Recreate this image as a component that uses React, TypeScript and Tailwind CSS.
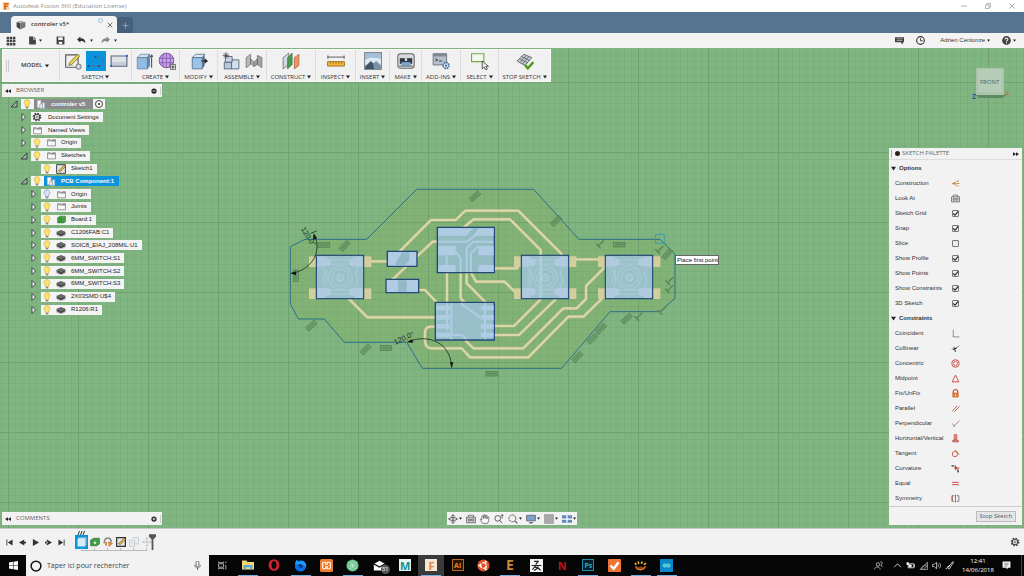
import React from "react";
import type { ReactNode } from "react";

const UI = "font-['Open_Sans','Noto_Sans',sans-serif]";
const ARIAL = "font-['Liberation_Sans',Arial,sans-serif]";

function Svg({ s, w, children, vb }: { s: number; w?: number; vb?: string; children: ReactNode }) {
  return (
    <svg width={w ?? s} height={s} viewBox={vb ?? "0 0 16 16"} fill="none" className="shrink-0" aria-hidden="true">
      {children}
    </svg>
  );
}

function Caret({ s = 4 }: { s?: number }) {
  return (
    <Svg s={s} vb="0 0 8 8">
      <path d="M0 1h8L4 7z" fill="#222" />
    </Svg>
  );
}

/* ---------- window title, document tabs, quick access ---------- */

function TitleBar() {
  return (
    <header className={`flex h-3 items-center justify-between bg-white ${UI}`}>
      <div className="flex items-center gap-[3px] pl-0.5 text-[6px] leading-3 text-[#8c8c8c]">
        <Svg s={8}>
          <rect x="1" width="14" height="16" rx="2" fill="#f3d3b5" />
          <path d="M4 2h9v3.500H8V7h4v3H8v5H4z" fill="#e0701d" />
        </Svg>
        <h1>Autodesk Fusion 360 (Education License)</h1>
      </div>
      <div className="flex items-center gap-[18px] pr-[9px]">
        <button aria-label="Minimize"><Svg s={6}><path d="M0 8h16" stroke="#999" strokeWidth="2" /></Svg></button>
        <button aria-label="Restore"><Svg s={6}><path d="M1 5h10v10H1zM5 5V1h10v10h-4" stroke="#999" strokeWidth="2" /></Svg></button>
        <button aria-label="Close"><Svg s={6}><path d="M1 1l14 14M15 1L1 15" stroke="#999" strokeWidth="2" /></Svg></button>
      </div>
    </header>
  );
}

function TabBar() {
  return (
    <div className={`flex h-[21px] items-end bg-[#56738f] pl-[11px] ${UI}`}>
      <div className="flex h-[17px] w-[106px] items-center rounded-t-sm bg-[#f3f3f3] pr-1 pl-[5px] text-[6px] text-[#333]">
        <Svg s={10}>
          <path d="M1 3l7-2 7 2-6 2z" fill="#aaa" /><path d="M1 3l6 2v10l-6-4z" fill="#444" /><path d="M7 5l8-2v8l-8 4z" fill="#777" />
        </Svg>
        <span className="grow pl-[5px] font-semibold">controler v5*</span>
        <span className="mb-2 mr-1"><Svg s={5}><circle cx="8" cy="8" r="6.500" stroke="#5ab0cf" strokeWidth="2" /></Svg></span>
        <button aria-label="Close tab"><Svg s={6}><path d="M2 2l12 12M14 2L2 14" stroke="#666" strokeWidth="2.500" /></Svg></button>
      </div>
      <button aria-label="New tab" className="flex h-4 w-4 items-center justify-center rounded-t-sm bg-[#46607a]">
        <Svg s={7}><path d="M8 1v14M1 8h14" stroke="#8aa0b5" strokeWidth="2.500" /></Svg>
      </button>
    </div>
  );
}

function QuickBar() {
  return (
    <div className={`flex h-[15px] items-center justify-between bg-[#f3f3f3] pr-2 pl-1.5 ${ARIAL}`}>
      <div className="flex items-center">
        <button aria-label="Data panel" className="mr-3">
          <Svg s={10}>
            <path d="M1 1h4v4H1zM6 1h4v4H6zM11 1h4v4h-4zM1 6h4v4H1zM6 6h4v4H6zM11 6h4v4h-4zM1 11h4v4H1zM6 11h4v4H6zM11 11h4v4h-4z" fill="#444" />
          </Svg>
        </button>
        <button aria-label="File" className="mr-3.5 flex items-center gap-0.5">
          <Svg s={9}><path d="M2 1h7v5h5v9H2z" fill="#444" /><path d="M10 1l4 4h-4z" fill="#444" /></Svg><Caret s={3} />
        </button>
        <button aria-label="Save" className="mr-3">
          <Svg s={9}><path d="M1 1h14v14H1z" fill="#444" /><path d="M4 2h8v5H4zM5 10h6v4H5z" fill="#f3f3f3" /></Svg>
        </button>
        <button aria-label="Undo" className="mr-2 flex items-center gap-1">
          <Svg s={9}><path d="M0 6l6-5v3c5 0 9 2 9 9-2-3-5-4-9-4v3z" fill="#333" /></Svg><Caret s={3} />
        </button>
        <button aria-label="Redo" className="flex items-center gap-1">
          <Svg s={9}><path d="M16 6l-6-5v3c-5 0-9 2-9 9 2-3 5-4 9-4v3z" fill="#888" /></Svg><Caret s={3} />
        </button>
      </div>
      <div className="flex items-center text-[6px] text-[#333]">
        <button aria-label="Comments" className="mr-3">
          <Svg s={9}><path d="M0 2h16v9h-2v4l-4-4H0z" fill="#444" /><path d="M3 5h10M3 8h10" stroke="#ddd" /></Svg>
        </button>
        <button aria-label="Job status" className="mr-[15px]">
          <Svg s={9}><circle cx="8" cy="8" r="6.800" stroke="#333" strokeWidth="2" /><path d="M8 4v4.500h4" stroke="#333" strokeWidth="1.600" /></Svg>
        </button>
        <button className="mr-3 flex items-center gap-0.5">Adrien Centonze<Caret s={3} /></button>
        <button aria-label="Help" className="flex items-center gap-0.5">
          <Svg s={9}><circle cx="8" cy="8" r="7.800" fill="#444" /><path d="M5.500 6c0-3.500 5-3 5-.3C10.500 8 8 7.500 8 10M8 11.500v2" stroke="#fff" strokeWidth="1.800" /></Svg><Caret s={3} />
        </button>
      </div>
    </div>
  );
}

/* ---------- ribbon ---------- */

const boxBody = (
  <>
    <path d="M2 5l3-3h8l-2 3z" fill="#cfe2f3" stroke="#56728f" strokeWidth=".6" />
    <path d="M11 5l2-3v10l-2 3z" fill="#5d86b5" stroke="#56728f" strokeWidth=".6" />
    <path d="M2 5h9v10H2z" fill="#92bbe4" stroke="#56728f" strokeWidth=".6" />
  </>
);

const ic = {
  sketch: (
    <Svg s={18}>
      <path d="M1.500 2.500h11v11h-11z" fill="#eee" stroke="#555" /><path d="M2 13L5 9l5 4z" fill="#d3d9de" />
      <path d="M5 9.500L12 2l2 1.600-7 7.500-2.500.8z" fill="#e8d44d" stroke="#6b6327" strokeWidth=".6" />
      <circle cx="13" cy="13" r="2.300" fill="#d5dbe2" stroke="#555" strokeWidth=".7" />
    </Svg>
  ),
  line: (
    <Svg s={18}>
      <path d="M1 12.500h9.500a4 4 0 0 0 0-8H7.500" stroke="#3c78ad" strokeWidth="1.100" />
      <circle cx="1.500" cy="12.500" r=".9" fill="#1c4d80" /><circle cx="10.500" cy="12.500" r=".9" fill="#1c4d80" /><circle cx="7.500" cy="4.500" r=".9" fill="#1c4d80" />
    </Svg>
  ),
  rect: (
    <Svg s={18}>
      <path d="M1 3.500h14v9H1z" fill="#dfe4ea" stroke="#596575" /><path d="M2 9h12v3H2z" fill="#c4ccd6" />
      <circle cx="15" cy="3.500" r="1" fill="#2765b8" /><circle cx="1" cy="12.500" r="1" fill="#2765b8" />
    </Svg>
  ),
  extrude: <Svg s={18}>{boxBody}<path d="M14.800 14V3M13.500 4.500L14.800 2.500 16 4.500" stroke="#333" strokeWidth=".8" /></Svg>,
  form: (
    <Svg s={18}>
      <circle cx="7.500" cy="7.500" r="6.500" fill="#c3a2e6" stroke="#74509c" strokeWidth=".8" />
      <path d="M1 5.500h13M1 9.500h13M5 1.500c-1.500 4-1.500 8 0 12M10 1.500c1.500 4 1.500 8 0 12M7.500 1v13" stroke="#7d53ab" strokeWidth=".7" />
      <path d="M11 11h4.500v4.500H11z" fill="#eee" stroke="#333" strokeWidth=".6" /><path d="M13.200 11.800v3M11.800 13.300h3" stroke="#333" strokeWidth=".8" />
    </Svg>
  ),
  modify: (
    <Svg s={18}>
      <path d="M2 5l3-3h8l-2 3z" fill="#dde9f4" stroke="#4a6a8c" strokeWidth=".7" /><path d="M11 5l2-3v10l-2 3z" fill="#4c7097" />
      <path d="M2 5h9v10H2z" fill="#9cc1e6" stroke="#4a6a8c" strokeWidth=".7" /><path d="M10 7.500h3V5.500l3 2.500-3 2.500V8.500h-3z" fill="#222" />
    </Svg>
  ),
  newComp: (
    <Svg s={18}>
      <path d="M2 9h6.500v6H2z" fill="#b9c9da" stroke="#53677d" strokeWidth=".8" /><path d="M8.500 7h6.500v8H8.500z" fill="#d5dfe9" stroke="#53677d" strokeWidth=".8" />
      <path d="M3 4h6v5H3z" fill="#c8d6e5" stroke="#53677d" strokeWidth=".8" />
      <path d="M3.500 0v6M.5 3h6M1.500 1l4 4M5.500 1l-4 4" stroke="#333" strokeWidth=".6" />
    </Svg>
  ),
  joint: (
    <Svg s={18}>
      <path d="M1 5l4-3v9l-4 3zM5 6l3 3v4L5 10z" fill="#b5b8bb" stroke="#666" strokeWidth=".6" />
      <path d="M15 14l-4-3V3l4 2zM11 6L8 9v4l3-2z" fill="#a0a4a8" stroke="#666" strokeWidth=".6" />
    </Svg>
  ),
  construct: (
    <Svg s={18}>
      <path d="M1 5l5-4v10l-5 4z" fill="#cfdbe6" stroke="#555" strokeWidth=".6" /><path d="M5 5l4-4v10l-4 4z" fill="#4d9a50" stroke="#346b36" strokeWidth=".6" />
      <path d="M11 5l4-3v10l-4 3z" fill="#ef9565" stroke="#a5532a" strokeWidth=".6" />
    </Svg>
  ),
  inspect: (
    <Svg s={18}>
      <path d="M.5 4.500h15M.8 3v3M15.200 3v3" stroke="#555" strokeWidth=".8" />
      <path d="M.5 8.500h15v4H.5z" fill="#f0b53a" stroke="#8d661b" strokeWidth=".7" /><path d="M3 9v1.500M5.500 9v1.500M8 9v1.500M10.500 9v1.500M13 9v1.500" stroke="#7a5611" strokeWidth=".6" />
    </Svg>
  ),
  insert: (
    <Svg s={18}>
      <path d="M.5.5h15v15H.5z" fill="#a3c0d8" stroke="#777" strokeWidth=".8" /><path d="M1 7c4-3 9-2 14-1v5H1z" fill="#dce9f2" />
      <path d="M1 13l5-5 4 4v3H1z" fill="#3f5366" /><path d="M8 10l3-2 4 4v3H9z" fill="#7c92a6" />
    </Svg>
  ),
  make: (
    <Svg s={18}>
      <rect x=".7" y="1.500" width="14.600" height="13" rx="2.500" fill="#d6d8da" stroke="#666" strokeWidth=".9" /><path d="M2.500 5.500h11v5h-11z" fill="#2f3843" />
      <path d="M7 5.500h2V8H7z" fill="#ddd" /><path d="M4 9h8v3.500H4z" fill="#7ba5cf" /><path d="M2 12.500h12" stroke="#777" />
    </Svg>
  ),
  addins: (
    <Svg s={18}>
      <path d="M1 1.500h12v10H1z" fill="#b9c0c9" stroke="#68727d" strokeWidth=".8" /><path d="M1 1.500h12v2.500H1z" fill="#7f8994" /><path d="M3 6l2 1-2 1M6 8h3" stroke="#333" strokeWidth=".8" />
      <circle cx="12.500" cy="12" r="2.600" fill="#dbe6f1" stroke="#456c97" strokeWidth="1.400" strokeDasharray="1.400 .6" /><circle cx="12.500" cy="12" r="1" fill="#456c97" />
    </Svg>
  ),
  select: (
    <Svg s={18}>
      <path d="M.5 1.500h11v7H.5z" fill="#f3f7ec" stroke="#79a648" /><path d="M10 8v7l1.800-1.600 1.300 2.500 1.400-.7-1.300-2.400h2.300z" fill="#eee" stroke="#333" strokeWidth=".7" />
    </Svg>
  ),
  stop: (
    <Svg s={18}>
      <path d="M1 8l6-6 7 3-6 7z" fill="#c6cbd0" stroke="#5c646c" strokeWidth=".8" /><path d="M3 6l7 3.500M5 4l7 3.500M3.300 9.500l6-6.500M5.600 10.800l6-7" stroke="#5c646c" strokeWidth=".7" />
      <path d="M8 11.500l2.500 3L15.500 9" stroke="#4b9c1e" strokeWidth="2.200" />
    </Svg>
  ),
};

const groups: { label: string; width: string; icons: ReactNode[]; active?: number }[] = [
  { label: "SKETCH", width: "w-[72px]", icons: [ic.sketch, ic.line, ic.rect], active: 1 },
  { label: "CREATE", width: "w-12", icons: [ic.extrude, ic.form] },
  { label: "MODIFY", width: "w-[38px]", icons: [ic.modify] },
  { label: "ASSEMBLE", width: "w-[49px]", icons: [ic.newComp, ic.joint] },
  { label: "CONSTRUCT", width: "w-[49px]", icons: [ic.construct] },
  { label: "INSPECT", width: "w-10", icons: [ic.inspect] },
  { label: "INSERT", width: "w-[34px]", icons: [ic.insert] },
  { label: "MAKE", width: "w-8", icons: [ic.make] },
  { label: "ADD-INS", width: "w-[39px]", icons: [ic.addins] },
  { label: "SELECT", width: "w-[38px]", icons: [ic.select] },
  { label: "STOP SKETCH", width: "w-[52px]", icons: [ic.stop] },
];

function Ribbon() {
  return (
    <nav className={`flex h-[33px] items-stretch self-start border border-[#fbfbfb] bg-[#f1f1f1] text-[6px] text-[#333] ${UI}`}>
      <div className="flex w-14 items-center">
        <span className="ml-[3px] h-3 w-[3px] border-x border-[#ccc]" />
        <button className="ml-3 flex items-center gap-[3px] font-semibold">MODEL<Caret s={4} /></button>
      </div>
      {groups.map((g) => (
        <div key={g.label} className={`flex flex-col items-center border-l border-[#dcdcdc] ${g.width}`}>
          <div className="mt-px flex gap-[3px]">
            {g.icons.map((icon, i) => (
              <button
                key={i}
                aria-label={`${g.label} ${i + 1}`}
                className={`flex h-5 w-5 items-center justify-center ${g.active === i ? "bg-[#0a94dc]" : ""}`}
              >
                {icon}
              </button>
            ))}
          </div>
          <button className="mt-0.5 flex items-center gap-0.5 leading-2 whitespace-nowrap">{g.label}<Caret s={4} /></button>
        </div>
      ))}
    </nav>
  );
}

/* ---------- browser tree ---------- */

function PanelBar({ title, sign }: { title: string; sign: "minus" | "plus" }) {
  return (
    <div className={`flex h-[13px] items-center bg-[#f2f2f2] pr-px pl-[3px] text-[6px] text-[#666] ${UI}`}>
      <button aria-label={`Collapse ${title}`}><Svg s={6}><path d="M8 3v10L0 8zM16 3v10L8 8z" fill="#222" /></Svg></button>
      <h2 className="grow pl-[5px]">{title}</h2>
      <button aria-label={`${title} options`}>
        <Svg s={6}><circle cx="8" cy="8" r="7" fill="#222" /><path d={sign === "minus" ? "M4 8h8" : "M4 8h8M8 4v8"} stroke="#fff" strokeWidth="2" /></Svg>
      </button>
      <span className="ml-[3px] h-2 w-px bg-[#ccc]" />
    </div>
  );
}

function Bulb({ off }: { off?: boolean }) {
  return (
    <Svg s={10}>
      <path d="M8 1a4.600 4.600 0 0 0-2.600 8.400V12h5.200V9.400A4.600 4.600 0 0 0 8 1z" fill={off ? "#dbe4f6" : "#ffe46a"} stroke={off ? "#7286ae" : "#c9a346"} strokeWidth="1" />
      <path d="M6 13h4v2H6z" fill="#777" />
    </Svg>
  );
}

const treeIcons = {
  folder: <Svg s={9}><path d="M1 3h5l1 2h8v9H1z" fill="#f8f8f8" stroke="#777" strokeWidth="1.300" /><path d="M1 5h14M9 3h6v2" stroke="#777" strokeWidth="1.300" /></Svg>,
  gear: <Svg s={10}><circle cx="8" cy="8" r="5.800" stroke="#444" strokeWidth="2.400" strokeDasharray="2.400 2.150" /><circle cx="8" cy="8" r="4.400" stroke="#444" strokeWidth="1.700" /><circle cx="8" cy="8" r="1.600" stroke="#444" strokeWidth="1" /></Svg>,
  doc: <Svg s={10}><path d="M2 2h6v12H2z" fill="#fafafa" stroke="#aaa" /><path d="M6 8h4v7H6zM10 6h4v9h-4z" fill="#f2f5f8" stroke="#90a4b8" /></Svg>,
  sketch: <Svg s={10}><path d="M1 1v14h14V1z" fill="#e4e4e4" stroke="#444" strokeWidth="1.600" /><path d="M4 11L13 2l2 2-8 8z" fill="#f3c832" stroke="#444" /></Svg>,
  board: <Svg s={9}><path d="M1 5l4-3h10v10l-3 2H1z" fill="#43a046" stroke="#2b7a30" /><path d="M5 5v8M8 5v8" stroke="#2b7a30" /></Svg>,
  chip: <Svg s={10}><path d="M1 6l7-3 7 3-7 3z" fill="#666" /><path d="M1 6v4l7 3.500L15 10V6L8 9z" fill="#444" /><path d="M2 8.500v4M5 10v4M11 10v4M14 8.500v4" stroke="#777" /></Svg>,
};

type TreeRow = { text: string; level: number; icon: keyof typeof treeIcons; open?: boolean; leaf?: boolean; bulb?: "on" | "off"; tone?: "root" | "active" };

const tree: TreeRow[] = [
  { text: "controler v5", level: 0, icon: "doc", open: true, bulb: "on", tone: "root" },
  { text: "Document Settings", level: 1, icon: "gear" },
  { text: "Named Views", level: 1, icon: "folder" },
  { text: "Origin", level: 1, icon: "folder", bulb: "on" },
  { text: "Sketches", level: 1, icon: "folder", open: true, bulb: "on" },
  { text: "Sketch1", level: 2, icon: "sketch", leaf: true, bulb: "on" },
  { text: "PCB Component:1", level: 1, icon: "doc", open: true, bulb: "on", tone: "active" },
  { text: "Origin", level: 2, icon: "folder", bulb: "off" },
  { text: "Joints", level: 2, icon: "folder", bulb: "on" },
  { text: "Board:1", level: 2, icon: "board", bulb: "on" },
  { text: "C1206FAB:C1", level: 2, icon: "chip", bulb: "on" },
  { text: "SOIC8_EIAJ_208MIL:U1", level: 2, icon: "chip", bulb: "on" },
  { text: "6MM_SWITCH:S1", level: 2, icon: "chip", bulb: "on" },
  { text: "6MM_SWITCH:S2", level: 2, icon: "chip", bulb: "on" },
  { text: "6MM_SWITCH:S3", level: 2, icon: "chip", bulb: "on" },
  { text: "2X03SMD:U$4", level: 2, icon: "chip", bulb: "on" },
  { text: "R1206:R1", level: 2, icon: "chip", bulb: "on" },
];

const indent = ["pl-0", "pl-2.5", "pl-5"];
const tones = { root: "bg-[#8b8b8b] font-bold text-white pr-2", active: "bg-[#0a94dc] font-bold text-white pr-[5px]", plain: "pr-1" };

function Tree() {
  return (
    <ul className={`mt-px grid h-[218px] auto-rows-fr pl-[5px] text-[6px] text-[#222] ${ARIAL}`}>
      {tree.map((r, i) => (
        <li key={i} className={`flex items-center ${indent[r.level]}`}>
          <span className="flex w-3.5 justify-center">
            {!r.leaf && (
              <button aria-label={`Toggle ${r.text}`}>
                <Svg s={8}>
                  {r.open ? <path d="M14 2v12H2z" fill="#9ab49a" stroke="#223" strokeWidth="1.500" /> : <path d="M4 1l7 7-7 7z" fill="#eef5ee" stroke="#223" strokeWidth="1.500" />}
                </Svg>
              </button>
            )}
          </span>
          <div className="flex h-2.5 items-center bg-[#f4f4f4] whitespace-nowrap">
            {r.bulb && <span className="w-[13px] pl-px"><Bulb off={r.bulb === "off"} /></span>}
            <span className={`flex h-full items-center ${tones[r.tone ?? "plain"]}`}>
              <span className={`flex justify-center ${r.bulb ? "mr-[3px] w-3.5" : "mr-[5px] w-3"}`}>{treeIcons[r.icon]}</span>
              {r.text}
            </span>
            {r.tone === "root" && (
              <label className="flex w-3 justify-center">
                <input type="radio" name="active-component" defaultChecked aria-label="Activate component" className="h-2 w-2 appearance-none rounded-full border border-[#444] bg-[#333] bg-clip-content p-0.5" />
              </label>
            )}
          </div>
        </li>
      ))}
    </ul>
  );
}

/* ---------- sketch palette ---------- */

const R = "#c8413c";
const options: [string, ReactNode | boolean][] = [
  ["Construction", <Svg s={9}><path d="M14 3L2 8l12 5M4 8h11" stroke="#c08a4a" strokeWidth="1.700" strokeDasharray="5 1" /></Svg>],
  ["Look At", <Svg s={9}><path d="M1 5h14v9H1z" fill="#e5e5ea" stroke="#555" strokeWidth="1.300" /><path d="M4 5V2h8v3M4 8h3v3H4zM9 8h3v3H9z" stroke="#555" strokeWidth="1.200" /></Svg>],
  ["Sketch Grid", true],
  ["Snap", true],
  ["Slice", false],
  ["Show Profile", true],
  ["Show Points", true],
  ["Show Constraints", true],
  ["3D Sketch", true],
];

const constraints: [string, ReactNode][] = [
  ["Coincident", <><path d="M4 1v13h11" stroke="#777" strokeWidth="1.400" /><path d="M4 13h1" stroke={R} strokeWidth="2" /></>],
  ["Collinear", <><path d="M1 9h5L15 3" stroke="#777" strokeWidth="1.400" /><path d="M5 5l3 9M4 10l6-3" stroke="#333" strokeWidth="1.800" /></>],
  ["Concentric", <><circle cx="8" cy="8" r="6.700" stroke={R} strokeWidth="1.600" /><circle cx="8" cy="8" r="3.700" stroke={R} strokeWidth="1.400" /></>],
  ["Midpoint", <path d="M8 2l6 12H2z" stroke={R} strokeWidth="1.600" />],
  ["Fix/UnFix", <><path d="M4 8V5c0-5 8-5 8 0v3" stroke="#c75f28" strokeWidth="2.200" /><path d="M2.500 6.500h11V15h-11z" fill="#d9702f" /><path d="M8 9v4M6 11h4" stroke="#fff" /></>],
  ["Parallel", <path d="M2 13L11 3M6 14l9-10" stroke="#a5604a" strokeWidth="1.600" />],
  ["Perpendicular", <path d="M2 8l5 5M4 14L15 3" stroke="#9d5a55" strokeWidth="1.400" />],
  ["Horizontal/Vertical", <><path d="M5.500 1h5v9h-5z" fill="#db8884" stroke={R} /><path d="M3 11h10v3H3z" fill="#db8884" stroke="#a33" /></>],
  ["Tangent", <><circle cx="7" cy="9" r="4.700" stroke="#c4573a" strokeWidth="1.600" /><path d="M7 1l8 9" stroke="#c4573a" strokeWidth="1.300" /></>],
  ["Curvature", <><path d="M1 3l4 1M7 5l4 3M12 10l1 5" stroke="#222" strokeWidth="2.200" /><path d="M7 2l2 9M15 7L6 8" stroke={R} strokeWidth="2" /></>],
  ["Equal", <path d="M2 6h12M2 10h12" stroke={R} strokeWidth="1.600" />],
  ["Symmetry", <><path d="M6 3H2v10h4M10 3h4v10h-4" stroke="#777" strokeWidth="1.600" /><path d="M2 3v10M8 1v14" stroke={R} strokeWidth="1.500" /></>],
];

function SectionTitle({ children }: { children: string }) {
  return (
    <h3 className="flex h-[15px] items-center gap-[3px] pl-0.5 font-bold">
      <Caret s={5} />
      {children}
    </h3>
  );
}

function Palette() {
  return (
    <aside className={`flex w-[133px] flex-col bg-[#f2f2f2] text-[6px] text-[#333] ${ARIAL}`}>
      <div className={`flex h-3 items-center border-b border-[#dcdcdc] pr-[3px] pl-0.5 text-[#666] ${UI}`}>
        <span className="h-2 w-px bg-[#aaa]" />
        <button aria-label="Palette options" className="ml-[3px]"><Svg s={5}><circle cx="8" cy="8" r="8" fill="#222" /></Svg></button>
        <h2 className="grow pl-0.5">SKETCH PALETTE</h2>
        <button aria-label="Collapse palette"><Svg s={6}><path d="M0 3v10l8-5zM8 3v10l8-5z" fill="#222" /></Svg></button>
      </div>
      <section className="mt-px">
        <SectionTitle>Options</SectionTitle>
        {options.map(([name, v]) =>
          typeof v === "boolean" ? (
            <label key={name} className="flex h-[15px] items-center pl-1.5">
              <span className="w-[54px] whitespace-nowrap">{name}</span>
              <span className="grid w-3 place-items-center">
                <input type="checkbox" defaultChecked={v} className="peer col-start-1 row-start-1 h-[7px] w-[7px] appearance-none rounded-[1px] border border-[#777] bg-[#eee]" />
                <span className="pointer-events-none invisible col-start-1 row-start-1 peer-checked:visible">
                  <Svg s={7}><path d="M3 8l4 4 7-9" stroke="#222" strokeWidth="2.500" /></Svg>
                </span>
              </span>
            </label>
          ) : (
            <button key={name} className="flex h-[15px] w-full items-center pl-1.5 text-left">
              <span className="w-[54px] whitespace-nowrap">{name}</span>
              <span className="flex w-3 justify-center">{v}</span>
            </button>
          ),
        )}
      </section>
      <section>
        <SectionTitle>Constraints</SectionTitle>
        {constraints.map(([name, icon]) => (
          <button key={name} className="flex h-[15px] w-full items-center pl-1.5 text-left">
            <span className="w-[54px] whitespace-nowrap">{name}</span>
            <span className="flex w-3 justify-center"><Svg s={9}>{icon}</Svg></span>
          </button>
        ))}
      </section>
      <div className="flex h-[19px] items-center justify-end border-t border-[#ccc] pr-1.5">
        <button className={`h-[11px] w-10 border border-[#bbb] bg-[#e6e6e6] leading-none text-[#555] ${UI}`}>Stop Sketch</button>
      </div>
    </aside>
  );
}

/* ---------- model canvas ---------- */

const outline = "M410 28H761L897 178H1140L1185 222V355L1140 395H990L845 565H427L380 487H193L133 417H55L31 373V200L75 178H260Z";

const traces = [
  "M358 215L453 120H527L556 92H715L847 224",
  "M338 298L458 185H530",
  "M530 160L580 118H690L782 210V226",
  "M270 244H325",
  "M415 330H435L470 367",
  "M205 355L262 412H470",
  "M501 276V370",
  "M542 276V355L570 385",
  "M560 276V310L618 368",
  "M572 276L588 305H674L704 335",
  "M640 265H712V250",
  "M640 438H702L782 358",
  "M640 465H717L827 358",
  "M468 440H450Q435 442 435 458V485Q438 505 455 505H545L570 532H745L865 410H910L967 355",
  "M555 480L580 505H730L850 385H890L918 357V318L974 262",
  "M886 238H960",
];

const marks = [
  [585, 49, -42], [131, 195, 0], [194, 198, -45], [48, 287, 90], [94, 437, -42], [257, 508, -45], [318, 504, 0], [635, 581, 0],
  [828, 123, -45], [1018, 194, 0], [1162, 222, -50], [1040, 416, -42], [963, 446, -45], [937, 476, -45], [892, 531, -45],
];

const perps = [[960, 193], [1138, 210], [1168, 303], [1167, 328], [1075, 410], [1145, 392]];

function Switch({ x }: { x: number }) {
  return (
    <g transform={`translate(${x} 226)`}>
      <g fill="#d3cf9c">
        <rect x="-22" y="3" width="24" height="32" /><rect x="141" y="3" width="24" height="32" />
        <rect x="-22" y="99" width="24" height="32" /><rect x="141" y="99" width="24" height="32" />
      </g>
      <rect width="142" height="130" fill="#9ac0c9" stroke="#23487a" strokeWidth="3.500" />
      <g fill="#b0cadf">
        <rect x="3" y="4" width="24" height="30" /><rect x="115" y="4" width="24" height="30" />
        <rect x="3" y="98" width="24" height="30" /><rect x="115" y="98" width="24" height="30" />
        <circle cx="31" cy="21" r="12" /><circle cx="111" cy="21" r="12" /><circle cx="31" cy="109" r="12" /><circle cx="111" cy="109" r="12" />
      </g>
      <g fill="none" stroke="#b6d3dd" strokeWidth="2">
        <path d="M36 14h70M36 26h70M36 104h70M36 116h70M18 36l8 18-6 20 6 22M30 40v50M124 36l-6 18 6 20-6 22" />
        <path d="M72 30l26 11 11 26-11 26-26 11-26-11-11-26 11-26z" />
        <circle cx="72" cy="67" r="25" /><circle cx="72" cy="67" r="10" strokeWidth="3" /><circle cx="72" cy="67" r="3" />
      </g>
    </g>
  );
}

function Board() {
  return (
    <svg className="absolute inset-0 h-full w-full" viewBox="0 48 1024 480" preserveAspectRatio="xMidYMid slice" role="img" aria-label="PCB sketch">
      <defs>
        <pattern id="minor" width="7" height="7" x="568" y="222" patternUnits="userSpaceOnUse">
          <path d="M0 .5h7M.5 0v7" stroke="#73a773" strokeOpacity=".5" />
        </pattern>
        <pattern id="major" width="70" height="70" x="568" y="222" patternUnits="userSpaceOnUse">
          <path d="M0 .5h70M.5 0v70" stroke="#6a9d6a" strokeOpacity=".7" />
        </pattern>
      </defs>
      <rect y="48" width="1024" height="480" fill="#80b581" />
      <g transform="translate(280 180) scale(.33333)">
        <path d={outline} fill="#82b274" />
      </g>
      <rect y="48" width="1024" height="480" fill="url(#minor)" />
      <rect y="48" width="1024" height="480" fill="url(#major)" />
      <g transform="translate(280 180) scale(.33333)">
        <path d={outline} fill="none" stroke="#2c6f8c" strokeWidth="3" />
        <g fill="none" strokeLinejoin="round">
          {traces.map((d) => <path key={d} d={d} stroke="#bdb583" strokeWidth="9" />)}
          {traces.map((d) => <path key={d} d={d} stroke="#d8d9a9" strokeWidth="6.500" />)}
        </g>
        <Switch x={109} />
        <Switch x={724} />
        <Switch x={976} />
        <path d="M782 228v126" stroke="#b0cadf" strokeWidth="8" />
        <g stroke="#23487a" strokeWidth="4">
          <path d="M322 214h89v45h-89z" fill="#b0cbe4" /><path d="M318 298h98v40h-98z" fill="#b0cbe4" />
          <path d="M472 142h171v136H472z" fill="#93bcc3" /><path d="M466 367h177v113H466z" fill="#98bfc9" />
        </g>
        <path d="M348 245l18-28h22v25l-14 14h-26zM354 301h26v34h-26z" fill="#93b9c8" />
        <g fill="#b0cbe4">
          <path d="M475 145h104l-20 22h-84zM595 145h46v22h-62zM475 198h52v28h-52zM595 198h46v28h-46zM475 255h52v21h-52zM595 255h46v21h-46z" />
          <path d="M469 377h40v14h-40zM469 405h40v14h-40zM469 432h40v14h-40zM469 458h40v14h-40zM602 377h39v14h-39zM602 405h39v14h-39zM602 432h39v14h-39zM602 458h39v14h-39z" />
        </g>
        <g fill="none" stroke="#b0cbe4" strokeWidth="6">
          <path d="M475 185h85l30-22M500 226v50M527 215l15 20v41M640 185h-60l-20 20v71M595 198l-22 22v56M542 370l58 42M501 370v80M514 370v108M490 465h55l15 12M615 370v108" />
        </g>
        <g fill="#628f62" stroke="#4f7c50" strokeWidth="2">
          {marks.map(([x, y, a]) => (
            <g key={`${x}-${y}`} transform={`translate(${x} ${y}) rotate(${a})`}>
              <rect x="-17" y="-7" width="34" height="14" fillOpacity=".6" />
              <path d="M-12 0h24" />
            </g>
          ))}
        </g>
        <g stroke="#5a885b" strokeWidth="4.500" fill="none">
          {perps.map(([x, y]) => <path key={`${x}-${y}`} d={`M${x - 12} ${y - 2}l14 14M${x - 5} ${y + 5}l17-17`} />)}
        </g>
        <path d="M1127 163h26v27h-26z" fill="none" stroke="#3e9ba5" strokeWidth="3" />
        <g fill="none" stroke="#1d2f1d" strokeWidth="2.500">
          <path d="M35 280C92 270 128 220 103 163M92 160l18-7" />
          <path d="M383 485C450 460 512 490 515 562" />
        </g>
        <path d="M31 280l17-6v12zM101 160l-2 19 12-4zM381 487l16-9 2 10zM515 565l-5-18h10z" fill="#111" />
        <g fill="#1d331d" fontFamily="Liberation Sans, Arial, sans-serif" fontSize="22">
          <text transform="translate(62 147) rotate(58)">120.0°</text>
          <text transform="translate(346 494) rotate(-24)">120.0°</text>
        </g>
      </g>
      <rect x="675.500" y="255.500" width="43" height="9" fill="#fff" stroke="#666" />
      <text x="677" y="262" fontFamily="Liberation Sans, Arial, sans-serif" fontSize="6" fill="#111">Place first point</text>
    </svg>
  );
}

function ViewCube() {
  return (
    <div className="absolute top-3 right-3">
      <svg width="42" height="42" viewBox="0 0 42 42" className={UI}>
        <path d="M6 35h28l4-1-6 4H9z" fill="#5d8a62" />
        <path d="M6 8h28v27H6z" fill="#a9c5ab" />
        <path d="M8 9h24v23H8z" fill="#b5cdb7" />
        <text x="10" y="24" fontSize="6" fill="#4d6570">FRONT</text>
        <text x="6" y="5" fontSize="6" fill="#5fd867">Y</text>
        <text x="35" y="36" fontSize="7" fill="#d0643f">X</text>
        <text x="2" y="39" fontSize="7" fontWeight="bold" fill="#2a5c9c">Z</text>
      </svg>
    </div>
  );
}

const navItems: [string, ReactNode, boolean][] = [
  ["Orbit", <path d="M8 1v14M5 4l3-3 3 3M5 12l3 3 3-3M1 8c2-3 12-3 14 0-2 3-12 3-14 0" stroke="#555" strokeWidth="1.500" />, true],
  ["Look at", <><path d="M1 5h14v9H1z" fill="#ddd" stroke="#555" strokeWidth="1.300" /><path d="M4 5V2h8v3M4 8h3v3H4zM9 8h3v3H9z" stroke="#555" strokeWidth="1.200" /></>, false],
  ["Pan", <path d="M4 15C2 12 1 10 1 8l2 1V3.500l1.500-1L6 7V1.500h2V7l1-5 2 .5V8l1.500-4L14 5c0 4 0 7-2 10z" fill="#fff" stroke="#555" strokeWidth="1.200" />, false],
  ["Zoom", <><circle cx="6" cy="7" r="4.500" stroke="#555" strokeWidth="1.500" /><path d="M9 10l4 5M13 1v6M11 3l2-2 2 2" stroke="#555" strokeWidth="1.500" /></>, false],
  ["Fit", <><circle cx="7" cy="7" r="5.500" stroke="#555" strokeWidth="1.500" strokeDasharray="4 1" /><path d="M11 11l4 4" stroke="#555" strokeWidth="2" /></>, true],
  ["Display", <><path d="M1 2h14v9H1z" fill="#7e9fc9" stroke="#667" strokeWidth="1.400" /><path d="M5 14h6" stroke="#556" strokeWidth="2" /></>, true],
  ["Grid", <path d="M1 1h14v14H1z" fill="#aaa" stroke="#888" />, true],
  ["Viewports", <><path d="M0 2h16v12H0z" fill="#6488ba" /><path d="M8 2v12M0 8h16" stroke="#fff" strokeWidth="2" /></>, true],
];

function NavBar() {
  return (
    <nav className="flex h-[13px] w-[130px] items-center justify-between bg-[#f2f2f2] px-px">
      {navItems.map(([name, icon, menu]) => (
        <button key={name} aria-label={name} className="flex items-center gap-px">
          <Svg s={10}>{icon}</Svg>
          {menu && <Caret s={3} />}
        </button>
      ))}
    </nav>
  );
}

/* ---------- timeline ---------- */

const play: [string, string][] = [
  ["First", "M1 1h2v14H1zM15 1v14L4 8z"],
  ["Previous", "M12 1v14L0 8zM10 6h6v4h-6z"],
  ["Play", "M2 0l14 8-14 8z"],
  ["Next", "M4 1v14l12-7zM0 6h6v4H0z"],
  ["Last", "M13 1h2v14h-2zM1 1v14l11-7z"],
];

const features: ReactNode[] = [
  <Svg s={12}><path d="M2 4h10v10H2z" fill="#d8ecf8" /><path d="M12 4l2-2v10l-2 2z" fill="#8ebede" /><path d="M2 4l2-2h10l-2 2z" fill="#b6d9ee" /></Svg>,
  <Svg s={10}><path d="M1 5l5-3h9v9l-4 3H1z" fill="#43a046" stroke="#205f26" /><circle cx="8" cy="9" r="2" fill="#d7ead8" /></Svg>,
  <Svg s={10}><path d="M2 10c0-11 11-11 11-2" stroke="#888" strokeWidth="2.500" /><path d="M9 8l6 2-5 5z" fill="#f2a13c" stroke="#8d5a18" /><path d="M5 8v6" stroke="#d98b24" strokeWidth="3" /></Svg>,
  <Svg s={10}><path d="M1 1v14h14V1z" fill="#e4e4e4" stroke="#333" strokeWidth="2" /><path d="M4 11L13 2l2 2-8 8z" fill="#f3c832" stroke="#444" /></Svg>,
  <Svg s={10}><path d="M1 5h8v10H1zM6 1h9v10H9" stroke="#c3cbd6" strokeWidth="1.500" /><path d="M3 8h4M3 11h4" stroke="#c3cbd6" /></Svg>,
  <Svg s={10}><path d="M8 1v14M1 8h14M6 3l2-2 2 2M6 13l2 2 2-2M3 6L1 8l2 2M13 6l2 2-2 2" stroke="#bbb" strokeWidth="1.300" /></Svg>,
];

function Timeline() {
  return (
    <div className="flex h-[27px] items-center justify-between border-t border-[#c8c8c8] bg-[#f1f1f1] pr-1 pl-[5px]">
      <div className="flex items-center">
        <div className="flex gap-1">
          {play.map(([n, d]) => (
            <button key={n} aria-label={n} className="flex w-[9px] justify-center"><Svg s={7}><path d={d} fill="#333" /></Svg></button>
          ))}
        </div>
        <ol className="relative ml-[9px] flex items-center">
          {features.map((f, i) => (
            <li key={i} className={`flex h-3.5 w-[13px] items-center justify-center ${i === 0 ? "bg-[#0a94dc]" : ""}`}>{f}</li>
          ))}
          <li className="-ml-1 flex"><Svg s={18} w={7} vb="0 0 8 18"><path d="M0 0h8v3L5 6v12H3V6L0 3z" fill="#555" /></Svg></li>
          <li className="absolute top-[15px] left-1.5 flex h-[3px] w-[66px] justify-between border-b border-[#bbb]">
            {features.map((_, i) => <span key={i} className="w-px bg-[#bbb]" />)}
          </li>
          <li className="absolute -top-0.5 left-0.5"><Svg s={4} w={9} vb="0 0 18 8"><path d="M2 8l3-8M7 8l3-8M12 8l3-8" stroke="#333" strokeWidth="2" /></Svg></li>
        </ol>
      </div>
      <button aria-label="Timeline settings">{treeIcons.gear}</button>
    </div>
  );
}

/* ---------- taskbar ---------- */

function Letter({ t, className }: { t: string; className: string }) {
  return <span className={`flex h-3 w-3 items-center justify-center leading-none font-bold ${className}`}>{t}</span>;
}

const apps: { name: string; icon: ReactNode; running?: boolean; current?: boolean }[] = [
  { name: "Task view", icon: <Svg s={9}><path d="M1 1v2h9V1M1 5h9v6H1zM1 15v-2h9v2M14 1v3M14 7v8" stroke="#ccc" strokeWidth="1.400" /></Svg> },
  { name: "Explorer", running: true, icon: <Svg s={12}><path d="M0 2h6l1 2h9v10H0z" fill="#f5d675" /><path d="M2 8h12v6h-3v-3H5v3H2z" fill="#56a9dc" /></Svg> },
  { name: "Opera", icon: <Svg s={12}><ellipse cx="8" cy="8" rx="7.300" ry="7.800" fill="#d3202e" /><ellipse cx="8" cy="8" rx="3.200" ry="5.300" fill="#0b0b0b" /></Svg> },
  { name: "Firefox", running: true, icon: <Svg s={13}><circle cx="8" cy="8.500" r="7" fill="#0b6fe8" /><path d="M1 6l2-5 3 3 5-2c3 2 4 4 4 7z" fill="#1e9bff" /><path d="M5 7c3-2 7 0 6 3-2 2-5 1-6-3z" fill="#083a88" /></Svg> },
  { name: "XAMPP", icon: <Svg s={13}><rect width="16" height="16" rx="2" fill="#f37b2c" /><path d="M4.500 4h2.500v2.500h2V4h2.500c2 0 2 4 0 4 2 0 2 4 0 4H9V9.500H7V12H4.500c-2 0-2-4 0-4-2 0-2-4 0-4z" stroke="#fff" strokeWidth="1.300" /></Svg> },
  { name: "Atom", running: true, icon: <Svg s={13}><circle cx="8" cy="8" r="7.500" fill="#5fbf85" /><ellipse cx="8" cy="8" rx="6" ry="2.300" stroke="#a9dfbd" strokeWidth=".8" transform="rotate(30 8 8)" /><ellipse cx="8" cy="8" rx="6" ry="2.300" stroke="#a9dfbd" strokeWidth=".8" transform="rotate(95 8 8)" /><ellipse cx="8" cy="8" rx="6" ry="2.300" stroke="#a9dfbd" strokeWidth=".8" transform="rotate(150 8 8)" /><circle cx="8" cy="8" r="1.200" fill="#e8fff0" /></Svg> },
  {
    name: "Mail",
    icon: (
      <span className="relative flex">
        <Svg s={13}><path d="M1 6l7-4 7 4v8H1z" fill="#fff" /><path d="M1 6l7 4 7-4" stroke="#111" strokeWidth="1.500" /></Svg>
        <span className={`absolute top-1.5 left-2 flex h-[9px] w-[9px] items-center justify-center rounded-full bg-[#555] text-[6px] leading-none text-white ${UI}`}>31</span>
      </span>
    ),
  },
  { name: "Maya", icon: <Letter t="M" className="bg-[#e4f3f2] text-[11px] text-[#1b8f8f]" /> },
  { name: "Fusion 360", running: true, current: true, icon: <Letter t="F" className="bg-[#f8e6d3] text-[11px] text-[#d88a3f]" /> },
  { name: "Illustrator", icon: <Letter t="Ai" className="border border-[#b06a20] bg-[#2b1602] text-[7px] text-[#e08a2a]" /> },
  { name: "Ubuntu", icon: <Svg s={13}><circle cx="8" cy="8" r="7.500" fill="#e2512a" /><circle cx="8" cy="8" r="3.600" stroke="#fff" strokeWidth="1.700" strokeDasharray="6 1.500" /><circle cx="2.800" cy="8" r="1.300" fill="#fff" /><circle cx="10.800" cy="3.400" r="1.300" fill="#fff" /><circle cx="10.800" cy="12.600" r="1.300" fill="#fff" /></Svg> },
  { name: "Eagle", running: true, icon: <Letter t="E" className="text-[14px] text-[#c98a3c]" /> },
  { name: "Inkscape", icon: <Svg s={13}><rect width="16" height="16" fill="#f5f5f5" /><path d="M5 3h6M10 3L7 7M2 8h12M8 7l-5 6M6 10c3 0 5 1 7 4M10 9c0 3-2 4-5 5" stroke="#222" strokeWidth="1.400" /></Svg> },
  { name: "Netflix", icon: <Letter t="N" className="text-[11px] text-[#c1101b]" /> },
  { name: "Photoshop", running: true, icon: <Letter t="Ps" className="border border-[#1c8fa8] bg-[#04202a] text-[7px] text-[#27a9c9]" /> },
  { name: "Tasks", icon: <Svg s={13}><rect width="16" height="16" rx="1" fill="#ef7434" /><path d="M3 8l4 4 6-8" stroke="#fff" strokeWidth="3" /></Svg> },
  { name: "Gimp", running: true, icon: <Svg s={13}><path d="M2 8c1 5 3 6 6 6s5-2 6-6l-3 2-3-1-3 1z" fill="#8a431b" /><path d="M2 9c1 5 10 6 12 0" stroke="#d9762a" strokeWidth="1.500" /><path d="M1 5l2 2M5 3l1 3M10 3L9 6M15 5l-3 2" stroke="#eab33a" strokeWidth="2" /></Svg> },
  { name: "Arduino", running: true, icon: <Svg s={13}><rect width="16" height="16" fill="#0b86c6" /><circle cx="5.800" cy="8" r="2" fill="#36c2b8" stroke="#8fe3dc" /><circle cx="10.200" cy="8" r="2" fill="#36c2b8" stroke="#8fe3dc" /></Svg> },
];

function Taskbar() {
  return (
    <footer className={`flex h-[21px] items-stretch bg-[#060606] ${UI}`}>
      <button aria-label="Start" className="flex w-[26px] items-center justify-center">
        <Svg s={9}><path d="M0 2.500l7-1v6H0zM8 1.300L16 0v7.500H8zM0 8.500h7v6l-7-1zM8 8.500h8V16l-8-1.300z" fill="#fff" /></Svg>
      </button>
      <label className="flex w-[183px] items-center gap-[5px] bg-[#f2f2f2] pr-[7px] pl-1">
        <Svg s={12}><circle cx="8" cy="8" r="6.500" stroke="#111" strokeWidth="2" /></Svg>
        <input type="text" aria-label="Rechercher" placeholder="Taper ici pour rechercher" className="min-w-0 grow bg-transparent text-[7px] leading-3 text-[#444] outline-none placeholder:text-[#444]" />
        <Svg s={9}><rect x="5.500" y="0" width="5" height="10" rx="2.500" stroke="#444" strokeWidth="1.300" /><path d="M3 7c0 7 10 7 10 0M8 12v4" stroke="#444" strokeWidth="1.300" /></Svg>
      </label>
      <div className="grid w-[471px] grid-cols-18">
        {apps.map((a) => (
          <button key={a.name} aria-label={a.name} className={`flex flex-col items-center ${a.current ? "bg-[#3a3a3a]" : ""}`}>
            <span className="flex grow items-center">{a.icon}</span>
            <span className={`h-px w-5 ${a.running ? "bg-[#76aee0]" : "bg-transparent"}`} />
          </button>
        ))}
      </div>
      <div className="ml-auto flex items-center gap-1 text-[6px] text-white">
        <span className="mr-1.5"><Svg s={9}><circle cx="7" cy="6" r="3" stroke="#ddd" strokeWidth="1.300" /><path d="M1 15c1-6 9-6 10 0M11 2c4-2 5 4 1 5l3 4" stroke="#ddd" strokeWidth="1.300" /></Svg></span>
        <Svg s={9}><path d="M2 11l6-6 6 6" stroke="#eee" strokeWidth="1.500" /></Svg>
        <Svg s={9}><path d="M4 5h10v7H4zM14 7h2v3h-2" stroke="#eee" strokeWidth="1.500" /><path d="M1 2h4v5H1zM5 6h5v5H5z" fill="#eee" /></Svg>
        <Svg s={9}><path d="M2 15L15 2v13zM5 15c0-5 4-8 10-8M9 15c0-3 2-5 6-5" stroke="#bbb" strokeWidth="1.300" /></Svg>
        <Svg s={9}><path d="M1 6h3l4-4v12l-4-4H1zM10 5c2 2 2 4 0 6M13 3c3 3 3 7 0 10" stroke="#ddd" strokeWidth="1.300" /></Svg>
        <Svg s={9}><path d="M1 14c4 0 2-5 6-5s3 5 0 5-2-4 2-7l5-6 1 2-5 7" stroke="#eee" strokeWidth="1.500" /></Svg>
        <div className="ml-1 w-8 text-center leading-[9px]"><p>12:41</p><p>14/06/2018</p></div>
        <span className="ml-1 mr-1.5"><Svg s={9}><path d="M1 1h14v11h-4l-3 3v-3H1z" fill="#f5f5f5" /><path d="M4 4h8M4 6.500h8M4 9h6" stroke="#555" /></Svg></span>
        <span className="mr-0.5 h-[21px] w-px bg-[#444]" />
      </div>
    </footer>
  );
}

export default function App() {
  return (
    <div className="flex h-screen flex-col overflow-hidden">
      <TitleBar />
      <TabBar />
      <QuickBar />
      <main className="relative min-h-0 grow overflow-hidden bg-[#80b581]">
        <Board />
        <div className="relative flex h-full flex-col pt-px pr-0.5 pb-[3px] pl-0.5">
          <Ribbon />
          <div className="mt-0.5 grid min-h-0 grow grid-cols-[160px_1fr_160px]">
            <div className="flex flex-col justify-between">
              <div>
                <PanelBar title="BROWSER" sign="minus" />
                <Tree />
              </div>
              <PanelBar title="COMMENTS" sign="plus" />
            </div>
            <div className="flex items-end justify-center"><NavBar /></div>
            <div className="flex items-end justify-end"><Palette /></div>
          </div>
        </div>
        <ViewCube />
      </main>
      <Timeline />
      <Taskbar />
    </div>
  );
}
